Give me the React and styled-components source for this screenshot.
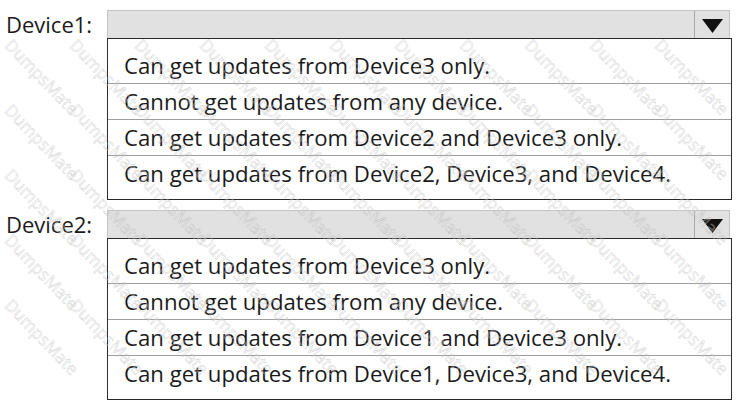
import React from "react";
import styled, { createGlobalStyle } from "styled-components";

const Global = createGlobalStyle`
  html, body {
    margin: 0;
    padding: 0;
    background: #fff;
  }
  body {
    font-family: "Open Sans", "Noto Sans", sans-serif;
    color: #1a1a1a;
  }
`;

const questions = [
  {
    label: "Device1:",
    options: [
      "Can get updates from Device3 only.",
      "Cannot get updates from any device.",
      "Can get updates from Device2 and Device3 only.",
      "Can get updates from Device2, Device3, and Device4.",
    ],
  },
  {
    label: "Device2:",
    options: [
      "Can get updates from Device3 only.",
      "Cannot get updates from any device.",
      "Can get updates from Device1 and Device3 only.",
      "Can get updates from Device1, Device3, and Device4.",
    ],
  },
];

// watermark tiles, only the ones fully inside the picture
const marks = Array.from({ length: 11 * 5 }, (_, i) => i);

function App() {
  return (
    <Page>
      <Global />
      {questions.map((q) => (
        <Block key={q.label}>
          <Label>{q.label}</Label>
          <Select>
            <Header>
              <Arrow>
                <svg width="21" height="14" viewBox="0 0 21 14">
                  <polygon points="0,0 21,0 10.5,14" fill="#111" />
                </svg>
              </Arrow>
            </Header>
            <List>
              {q.options.map((opt, i) => (
                <Option
                  key={i}
                  first={i === 0}
                  last={i === q.options.length - 1}
                >
                  {opt}
                </Option>
              ))}
            </List>
          </Select>
        </Block>
      ))}
      <Watermark aria-hidden="true">
        {marks.map((i) => (
          <Mark key={i}>DumpsMate</Mark>
        ))}
      </Watermark>
    </Page>
  );
}

const Page = styled.div`
  position: relative;
  width: 742px;
  height: 401px;
  padding-top: 10px;
  box-sizing: border-box;
  display: flex;
  flex-direction: column;
  gap: 10px;
  overflow: hidden;
`;

const Block = styled.div`
  display: grid;
  grid-template-columns: 107px 625px;
`;

const Label = styled.div`
  font-size: 22px;
  line-height: 28px;
  padding-left: 6px;
`;

const Select = styled.div`
  display: flex;
  flex-direction: column;
`;

const Header = styled.div`
  height: 27px;
  background: #e1e1e1;
  border: 1px solid #c4c4c4;
  border-bottom: none;
  margin-right: 2px;
  display: flex;
  justify-content: flex-end;
`;

const Arrow = styled.div`
  width: 35px;
  border-left: 1px solid #a8a8a8;
  display: flex;
  align-items: center;
  justify-content: center;
  padding-top: 2px;
  box-sizing: border-box;
`;

const List = styled.div`
  border: 1px solid #2b2b2b;
  display: flex;
  flex-direction: column;
`;

const Option = styled.div`
  height: ${(p) => (p.first || p.last ? "44px" : "36px")};
  padding-top: ${(p) => (p.first ? "8px" : "0")};
  padding-bottom: ${(p) => (p.last ? "8px" : "0")};
  box-sizing: border-box;
  display: flex;
  align-items: center;
  padding-left: 16px;
  font-size: 22.2px;
  border-top: ${(p) => (p.first ? "none" : "1px solid #9e9e9e")};
`;

const Watermark = styled.div`
  position: absolute;
  left: 9px;
  top: 44px;
  display: grid;
  grid-template-columns: repeat(11, 65px);
  grid-auto-rows: 65px;
  pointer-events: none;
`;

const Mark = styled.span`
  justify-self: center;
  align-self: center;
  width: max-content;
  font-family: "Open Sans", sans-serif;
  font-size: 17px;
  line-height: 20px;
  color: rgba(255, 255, 255, 0.3);
  -webkit-text-stroke: 0.5px rgba(140, 140, 140, 0.4);
  transform: rotate(46deg);
  white-space: nowrap;
`;

export default App;
